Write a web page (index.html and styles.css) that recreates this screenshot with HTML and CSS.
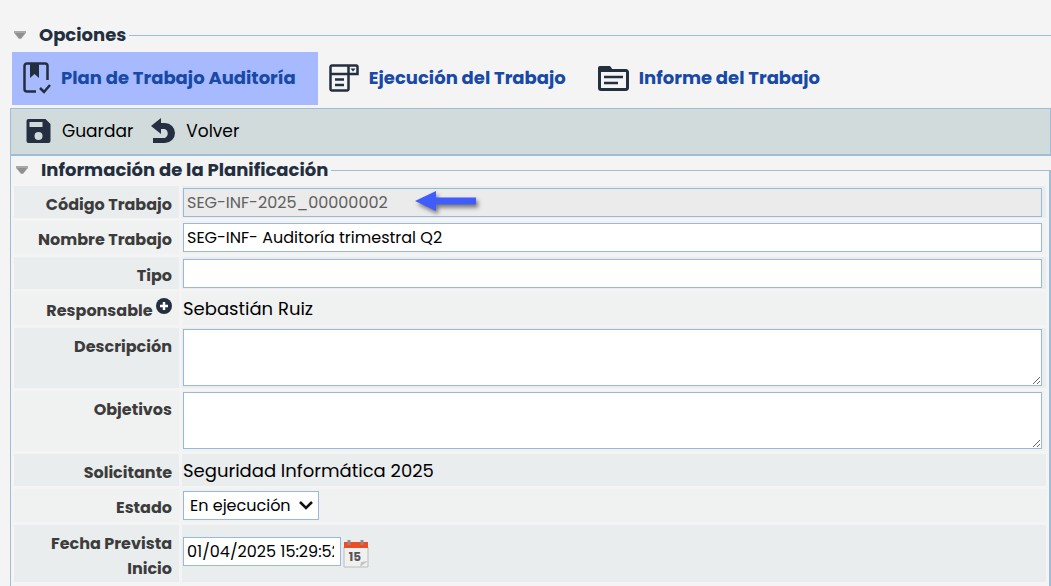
FILE: index.html
```
<!DOCTYPE html>
<html lang="es">
<head>
  <meta charset="UTF-8" />
  <meta name="viewport" content="width=device-width, initial-scale=1.0" />
  <title>Plan de Trabajo Auditoría</title>
  <link rel="stylesheet" href="styles.css">
</head>
<body>
  <fieldset class="options">
    <legend>
      <svg class="toggle" viewBox="0 0 12 10"><path d="M0 1h12v2L7 9H5L0 3z" fill="#a8a8a8"/><path d="M1 3h10L7 8H5z" fill="#8f8f8f"/></svg>
      <span>Opciones</span>
    </legend>
    <nav class="tabs">
      <a href="#" class="tab active">
        <svg width="28" height="32" viewBox="0 0 28 32" fill="none" stroke="#232e3e" stroke-width="2.500">
          <path d="M13 29.500H4a2.500 2.500 0 0 1-2.500-2.500V4A2.500 2.500 0 0 1 4 1.500h18A2.500 2.500 0 0 1 24.500 4v14"/>
          <path d="M7 2h9v14l-4.500-4L7 16z" fill="#232e3e" stroke="none"/>
          <path d="M17 26l4 4 6-7"/>
        </svg>
        <span>Plan de Trabajo Auditoría</span>
      </a>
      <a href="#" class="tab">
        <svg width="30" height="28" viewBox="0 0 30 28" fill="none" stroke="#232e3e" stroke-width="2.500">
          <path d="M3 1.500h24a1.500 1.500 0 0 1 1.500 1.500v7h-27V3A1.500 1.500 0 0 1 3 1.500zM19.500 1.500V25a1.500 1.500 0 0 1-1.500 1.500H3A1.500 1.500 0 0 1 1.500 25V10M6 15.500h9M6 21h9"/>
          <path d="M21.500 4.500h5l-2.500 3z" fill="#232e3e" stroke="none"/>
        </svg>
        <span>Ejecución del Trabajo</span>
      </a>
      <a href="#" class="tab">
        <svg width="31" height="25" viewBox="0 0 31 25" fill="none" stroke="#232e3e" stroke-width="3">
          <path d="M3 4.500h25A1.500 1.500 0 0 1 29.500 6v16a1.500 1.500 0 0 1-1.500 1.500H3A1.500 1.500 0 0 1 1.500 22V6"/>
          <path d="M0 6V2a2 2 0 0 1 2-2h10l3 4v2z" fill="#232e3e" stroke="none"/>
          <path d="M6 11h19M6 17h14" stroke-width="2.500"/>
        </svg>
        <span>Informe del Trabajo</span>
      </a>
    </nav>
  </fieldset>

  <main class="panel">
    <div class="toolbar">
      <button type="button">
        <svg width="25" height="24" viewBox="0 0 24 24"><path fill="#252f41" fill-rule="evenodd" d="M2 0h17l5 5v17a2 2 0 0 1-2 2H2a2 2 0 0 1-2-2V2a2 2 0 0 1 2-2zM3 3v5h13V3zM12 13a4 4 0 1 0 0 8 4 4 0 0 0 0-8z"/></svg>
        <span>Guardar</span>
      </button>
      <button type="button">
        <svg width="24" height="26" viewBox="0 0 24 26"><path d="M0 8L10 0v5h4a10 10 0 0 1 0 20H2v-5h12a5 5 0 0 0 0-9h-4v5z" fill="#252f41"/></svg>
        <span>Volver</span>
      </button>
    </div>

    <form>
      <fieldset class="planning">
        <legend>
          <svg class="toggle" viewBox="0 0 12 10"><path d="M0 1h12v2L7 9H5L0 3z" fill="#a8a8a8"/><path d="M1 3h10L7 8H5z" fill="#8f8f8f"/></svg>
          <span>Información de la Planificación</span>
        </legend>

        <div class="rows">
          <div class="row">
            <div class="name"><label for="codigo">Código Trabajo</label></div>
            <div class="value with-arrow">
              <input type="text" id="codigo" value="SEG-INF-2025_00000002" disabled />
              <svg class="arrow" width="62" height="24" viewBox="0 0 62 24"><path d="M0 10L21 0v6.500h40v7H21V20z" fill="#405cfa"/></svg>
            </div>
          </div>
          <div class="row">
            <div class="name"><label for="nombre">Nombre Trabajo</label></div>
            <div class="value"><input type="text" id="nombre" value="SEG-INF- Auditoría trimestral Q2" /></div>
          </div>
          <div class="row">
            <div class="name"><label for="tipo">Tipo</label></div>
            <div class="value"><input type="text" id="tipo" /></div>
          </div>
          <div class="row">
            <div class="name">
              <span>Responsable</span>
              <button type="button" class="add" aria-label="Agregar responsable">
                <svg width="16" height="16" viewBox="0 0 16 16"><circle cx="8" cy="8" r="8" fill="#252f41"/><path d="M8 4v8M4 8h8" stroke="#fff" stroke-width="2.500"/></svg>
              </button>
            </div>
            <div class="value">Sebastián Ruiz</div>
          </div>
          <div class="row tall">
            <div class="name"><label for="descripcion">Descripción</label></div>
            <div class="value"><textarea id="descripcion"></textarea></div>
          </div>
          <div class="row tall">
            <div class="name"><label for="objetivos">Objetivos</label></div>
            <div class="value"><textarea id="objetivos"></textarea></div>
          </div>
          <div class="row">
            <div class="name">Solicitante</div>
            <div class="value">Seguridad Informática 2025</div>
          </div>
          <div class="row">
            <div class="name"><label for="estado">Estado</label></div>
            <div class="value">
              <div class="select">
                <select id="estado"><option>En ejecución</option></select>
                <svg width="14" height="9" viewBox="0 0 14 9"><path d="M1 1l6 6 6-6" fill="none" stroke="#111" stroke-width="2.500"/></svg>
              </div>
            </div>
          </div>
          <div class="row">
            <div class="name"><label for="fecha">Fecha Prevista Inicio</label></div>
            <div class="value date">
              <input type="text" id="fecha" value="01/04/2025 15:29:52" />
              <button type="button" class="calendar" aria-label="Abrir calendario">
                <svg width="26" height="30" viewBox="0 0 26 30">
                  <path d="M1 8h24v20H1z" fill="#f0f0f0" stroke="#bcbcbc"/>
                  <path d="M1 3h24v6H1z" fill="#ec4d24"/>
                  <path d="M6 1v5M19 1v5" stroke="#8d8d8d" stroke-width="3"/>
                  <text x="12" y="22" text-anchor="middle" class="day">15</text>
                  <path d="M17 28l1-5 7-1z" fill="#c4c4c4"/>
                </svg>
              </button>
            </div>
          </div>
        </div>
      </fieldset>
    </form>
  </main>
</body>
</html>
```
FILE: styles.css
```
* {
  box-sizing: border-box;
}
body {
  margin: 0;
  padding: 23px 0 0 10px;
  min-height: 100vh;
  display: flex;
  flex-direction: column;
  background: #f4f4f4;
  color: #000;
  font-family: 'Poppins', 'Inter', sans-serif;
  font-size: 18px;
}
input, select, textarea, button {
  font-family: inherit;
  font-size: 16px;
  color: #000;
}
button {
  border: none;
  background: none;
  padding: 0;
  cursor: pointer;
}
fieldset {
  margin: 0;
  padding: 0;
  border: 0 solid #9fbdd8;
  min-width: 0;
}
legend {
  display: flex;
  align-items: center;
  gap: 13px;
  padding: 0 3px 0 4px;
  line-height: 24px;
  font-size: 18px;
  font-weight: 700;
  color: #232e3e;
}
.toggle {
  width: 12px;
  height: 10px;
}
.options {
  border-top-width: 1px;
}
.tabs {
  display: flex;
  padding: 5px 0 3px 2px;
}
.tab {
  display: flex;
  align-items: center;
  gap: 10px;
  height: 53px;
  padding: 0 21px 3px 11px;
  color: #1849a6;
  font-size: 18px;
  font-weight: 700;
  text-decoration: none;
}
.tab svg {
  margin-top: 2px;
}
.tab.active {
  padding-right: 22px;
  background: #a7b9ff;
}
.panel {
  flex: 1;
  display: flex;
  flex-direction: column;
  border-left: 1px solid #9fbdd8;
}
.toolbar {
  display: flex;
  gap: 18px;
  height: 48px;
  padding: 0 15px 2px;
  background: #d2dbdb;
  border: solid #9fbdd8;
  border-width: 1px 1px 2px 0;
}
.toolbar button {
  display: flex;
  align-items: center;
  gap: 11px;
  font-size: 17px;
}
form {
  flex: 1;
  display: flex;
  flex-direction: column;
  padding-top: 2px;
}
.planning {
  flex: 1;
  border-width: 1px 2px 0 0;
}
.planning legend {
  padding-left: 5px;
}
.rows {
  display: flex;
  flex-direction: column;
  gap: 3px;
  padding: 4px 3px 3px;
}
.row {
  display: grid;
  grid-template-columns: 165px 1fr;
  column-gap: 3px;
  min-height: 32px;
}
.row:nth-child(even) {
  min-height: 33px;
}
.name, .value {
  background: #e9eded;
}
.row:nth-child(even) .name, .row:nth-child(even) .value {
  background: #f0f2f1;
}
.name {
  padding: 6px 7px 1px;
  line-height: 25px;
  text-align: right;
  font-size: 16px;
  font-weight: 700;
  color: #3c3c3c;
}
.value {
  display: flex;
  align-items: center;
  padding: 0 4px 0 1px;
}
.value input, .value textarea, .select select {
  height: 29px;
  padding: 0 3px;
  border: 1px solid #99b9da;
  border-radius: 0;
  background: #fff;
}
.value input, .value textarea {
  width: 100%;
}
.value input:disabled {
  background: #eaebea;
  color: #606060;
}
.value textarea {
  display: block;
  height: 57px;
}
.row.tall {
  min-height: 60px;
}
.tall .value {
  align-items: flex-start;
  padding-top: 1px;
}
.with-arrow {
  position: relative;
}
.arrow {
  position: absolute;
  left: 233px;
  top: 5px;
  overflow: visible;
  filter: drop-shadow(2px 3px 2px rgba(0, 0, 0, 0.5));
}
.add {
  vertical-align: top;
}
.add svg {
  display: block;
}
.select {
  display: grid;
  align-items: center;
}
.select select {
  grid-area: 1 / 1;
  width: 136px;
  padding-left: 6px;
  appearance: none;
}
.select svg {
  grid-area: 1 / 1;
  justify-self: end;
  margin-right: 6px;
  pointer-events: none;
}
.value.date {
  align-items: flex-start;
  gap: 2px;
  padding-top: 12px;
}
.value.date input {
  width: 158px;
  padding-right: 6px;
}
.calendar svg {
  display: block;
  margin-top: 2px;
}
.day {
  font-size: 12px;
  font-weight: 700;
  fill: #555;
}
```
